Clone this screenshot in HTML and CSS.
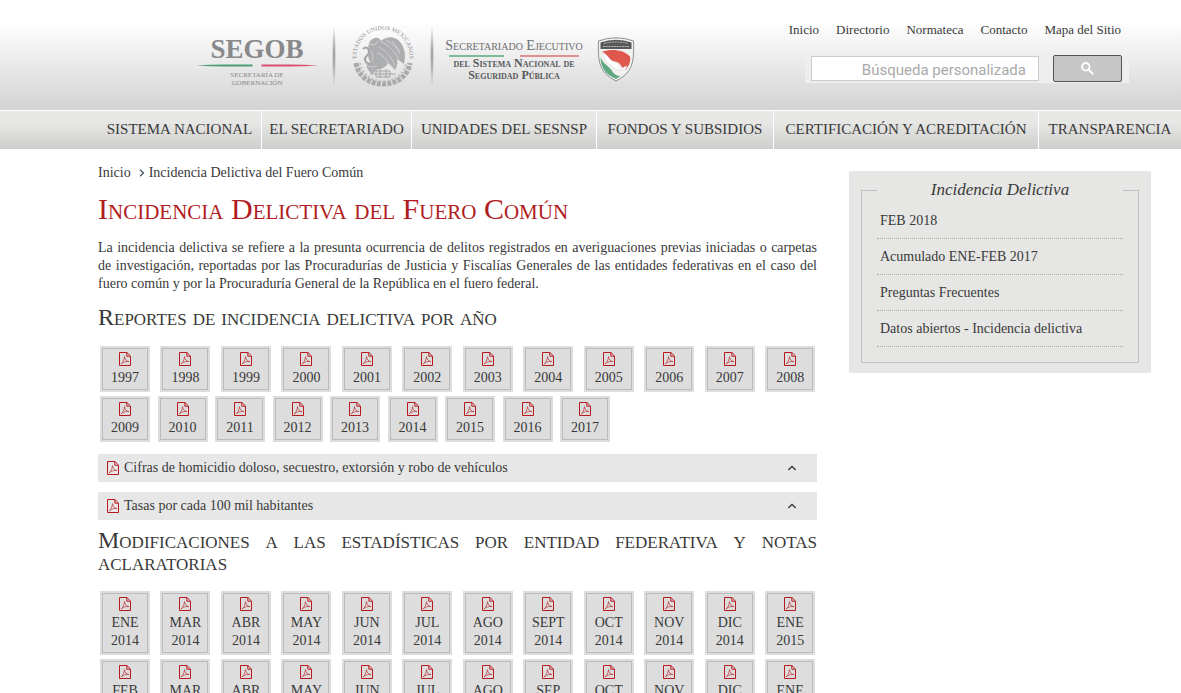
FILE: index.html
```html
<!DOCTYPE html>
<html lang="es">
<head>
<meta charset="utf-8">
<meta name="viewport" content="width=device-width, initial-scale=1">
<title>Incidencia Delictiva del Fuero Común</title>
<link rel="stylesheet" href="styles.css">
</head>
<body>
<svg class="defs" width="0" height="0" aria-hidden="true">
  <symbol id="pdf" viewBox="0 0 12 14">
    <path d="M.5.5h7.4l3.6 3.6v9.4H.5z M7.8.6v3.6h3.6" fill="none" stroke="currentColor"/>
    <path d="M2.2 11.8c1.6-.9 3-4 3.3-7.2.3 2.600 1.800 4.800 4.400 5-2.400-.6-5 .1-7.700 2.200z" fill="none" stroke="currentColor" stroke-width=".6"/>
  </symbol>
  <symbol id="up" viewBox="0 0 10 6"><path d="M1.300 5 5 1.500 8.700 5" fill="none" stroke="currentColor" stroke-width="1.300"/></symbol>
</svg>
<header class="header">
  <div class="logos">
    <div class="segob">
      <span class="segob-name">SEGOB</span>
      <svg class="segob-line" viewBox="0 0 122 3" aria-hidden="true"><path d="M0 1.500Q14 .5 28 .5h28.500v2H28Q14 2.500 0 1.500z" fill="#4c9c74"/><path d="M65.500.5H94q14 0 28 1-14 1-28 1H65.500z" fill="#d9506f"/></svg>
      <span class="segob-sub">SECRETARÍA DE<br>GOBERNACIÓN</span>
    </div>
    <span class="divider"></span>
    <svg class="seal" viewBox="0 0 62 62" role="img" aria-label="Estados Unidos Mexicanos">
      <defs><path id="arc" d="M6 40a26.500 26.500 0 1 1 50 0"/></defs>
      <text class="seal-text"><textPath href="#arc" startOffset="50%" text-anchor="middle">ESTADOS UNIDOS MEXICANOS</textPath></text>
      <path d="M4 38c2 13 13 21 27 21s25-8 27-21" fill="none" stroke="#a9aaac" stroke-width="5" stroke-dasharray="4 1.200"/>
      <path d="M8 38c2 11 11 18 23 18s21-7 23-18" fill="none" stroke="#bcbdbf" stroke-width="2" stroke-dasharray="2 2"/>
      <path d="M17 27c-2-6 0-13 6-14 3-1 5 1 6 3 6-5 14-5 19 1 5 6 6 14 4 22-3-2-5-4-7-5 1 4 0 8-2 11-3-3-5-6-7-7-2 4-6 6-10 6l-6 5c-4-3-6-7-5-11 2 1 4 1 6 0-4-1-6-6-4-11z" fill="#adaeb0"/>
      <path d="M29 17c6 2 13 8 18 17M34 15c6 3 11 8 14 14M27 22c6 3 12 9 16 19M25 28c6 2 10 6 12 12M17 19l6 1 3-4M18 26c3 2 4 6 2 10M13 38c3 4 7 5 12 3M40 16l8 10" fill="none" stroke="#d0d0d2" stroke-width="1"/>
      <path d="M11 24c3-3 6-1 6 3s-5 4-4 8 5 4 7 3" fill="none" stroke="#a3a4a6" stroke-width="2"/>
      <path d="M24 46h14v6H24zM28 44v9M34 44v9M18 49h26" fill="#dedede" stroke="#a6a7a9"/>
    </svg>
    <span class="divider"></span>
    <div class="sesnsp">
      <span class="sesnsp-name">Secretariado Ejecutivo</span>
      <span class="sesnsp-line"></span>
      <span class="sesnsp-sub">del Sistema Nacional de<br>Seguridad Pública</span>
    </div>
    <svg class="shield" viewBox="0 0 38 45" aria-hidden="true">
      <path d="M1.500 4Q19-2.500 36.500 4c.6 20 0 31-17.500 40C1.500 35 .9 24 1.500 4z" fill="#f1f1f1" stroke="#8c8d8f"/>
      <path d="M3.500 5.500Q19 0 34.500 5.500V12h-31z" fill="#58585a"/>
      <path d="M7 6.500Q19 3.500 31 6.500M6 9.500h26" fill="none" stroke="#b5b5b5" stroke-dasharray="2 .7"/>
      <path d="M5 14.500c10-3 22-2 28 5 1 5-1 9-4 13-4-1-5-5-8-7-5-2-8-1-11-6-2-3-3-4-5-5z" fill="#e0574e"/>
      <path d="M3.500 20c2 6 7 8 11 13 2 4 5 6 9 6l-4.500 3C8 37 4 31 3.500 20z" fill="#5fa77f"/>
      <path d="M5 16c5 1 6 4 9 7 4 3 7 2 8 6 1 3 4 3 5 1l3-1c0 3-3 4-6 4-6 0-8-4-12-6-4-3-5-7-7-11z" fill="#fff" stroke="#c9c9c9" stroke-width=".4"/>
    </svg>
  </div>
  <div class="tools">
    <nav class="top-links" aria-label="Enlaces">
      <a href="#">Inicio</a><a href="#">Directorio</a><a href="#">Normateca</a><a href="#">Contacto</a><a href="#">Mapa del Sitio</a>
    </nav>
    <form class="search">
      <input class="search-box" type="text" aria-label="Búsqueda personalizada" placeholder="Búsqueda personalizada">
      <button class="search-button" type="button" aria-label="Buscar"><svg width="13" height="13" viewBox="0 0 13 13" aria-hidden="true"><circle cx="4.800" cy="4.800" r="3.800" fill="none" stroke="#fff" stroke-width="1.800"/><path d="m7.600 7.600 4.600 4.600" stroke="#fff" stroke-width="2"/></svg></button>
    </form>
  </div>
</header>
<nav class="menu" aria-label="Principal">
  <a href="#">SISTEMA NACIONAL</a><a href="#">EL SECRETARIADO</a><a href="#">UNIDADES DEL SESNSP</a><a href="#">FONDOS Y SUBSIDIOS</a><a href="#">CERTIFICACIÓN Y ACREDITACIÓN</a><a href="#">TRANSPARENCIA</a>
</nav>
<div class="page">
  <main class="content">
    <nav class="breadcrumb" aria-label="Ruta"><a href="#">Inicio</a><svg width="6" height="8" viewBox="0 0 6 8" aria-hidden="true"><path d="m1 .8 3.500 3.200L1 7.200" fill="none" stroke="#44525e" stroke-width="1.300"/></svg><span>Incidencia Delictiva del Fuero Común</span></nav>
    <h1 class="title">Incidencia Delictiva del Fuero Común</h1>
    <p class="intro">La incidencia delictiva se refiere a la presunta ocurrencia de delitos registrados en averiguaciones previas iniciadas o carpetas de&nbsp;investigación, reportadas por las Procuradurías de Justicia y Fiscalías Generales de las entidades federativas en el caso del fuero&nbsp;común y por la Procuraduría General de la República en el fuero federal.</p>
    <h2 class="subtitle">Reportes de incidencia delictiva por año</h2>
    <div class="tiles" data-items="1997,1998,1999,2000,2001,2002,2003,2004,2005,2006,2007,2008,2009,2010,2011,2012,2013,2014,2015,2016,2017"></div>
    <button class="fold" type="button"><svg class="pdf"><use href="#pdf"/></svg><span>Cifras de homicidio doloso, secuestro, extorsión y robo de vehículos</span><svg class="fold-arrow"><use href="#up"/></svg></button>
    <button class="fold" type="button"><svg class="pdf"><use href="#pdf"/></svg><span>Tasas por cada 100 mil habitantes</span><svg class="fold-arrow"><use href="#up"/></svg></button>
    <h2 class="subtitle">Modificaciones a las estadísticas por entidad federativa y notas aclaratorias</h2>
    <div class="tiles" data-items="ENE 2014,MAR 2014,ABR 2014,MAY 2014,JUN 2014,JUL 2014,AGO 2014,SEPT 2014,OCT 2014,NOV 2014,DIC 2014,ENE 2015,FEB 2015,MAR 2015,ABR 2015,MAY 2015,JUN 2015,JUL 2015,AGO 2015,SEP 2015,OCT 2015,NOV 2015,DIC 2015,ENE 2016,FEB 2016"></div>
  </main>
  <aside class="side">
    <div class="side-frame">
      <h2 class="side-title">Incidencia Delictiva</h2>
      <ul class="side-list">
        <li><a href="#">FEB 2018</a></li>
        <li><a href="#">Acumulado ENE-FEB 2017</a></li>
        <li><a href="#">Preguntas Frecuentes</a></li>
        <li><a href="#">Datos abiertos - Incidencia delictiva</a></li>
      </ul>
    </div>
  </aside>
</div>
<script src="script.js"></script>
</body>
</html>
```
FILE: styles.css
```css
* { box-sizing: border-box; }
html { scrollbar-width: none; }
body { margin: 0; background: #fff; color: #393939; font: 14px/18px "Liberation Serif", serif; }
a { color: inherit; text-decoration: none; }
svg { display: block; flex: none; }
.defs { position: absolute; }

.header { display: flex; justify-content: space-between; align-items: flex-start; padding: 21px 52px 23px 196px; background: linear-gradient(#fff 20%, #d3d3d3); }
.logos { display: flex; align-items: center; padding-top: 3px; }
.segob { width: 122px; display: flex; flex-direction: column; align-items: center; padding-top: 10px; color: #88898b; }
.segob-name { font-size: 27px; line-height: 30px; font-weight: bold; }
.segob-line { width: 100%; height: 3px; }
.segob-sub { margin-top: 4px; font-size: 7px; line-height: 8px; text-align: center; }
.divider { width: 4px; height: 62px; margin: 0 14px; background: radial-gradient(closest-side, #8a8c8e, transparent); }
.seal { width: 62px; height: 62px; margin: 0 2px; overflow: visible; }
.seal-text { font-size: 6px; fill: #8f9092; }
.sesnsp { display: flex; flex-direction: column; align-items: center; width: 140px; margin-left: -4px; padding-top: 6px; color: #58595b; white-space: nowrap; }
.sesnsp-name { font-size: 14px; line-height: 18px; font-variant: small-caps; color: #6e6f71; }
.sesnsp-line { align-self: stretch; height: 2px; margin: 0 5px; background: linear-gradient(90deg, #7dbb98 42%, transparent 42% 55%, #e09090 55%); }
.sesnsp-sub { font-size: 12px; line-height: 12px; font-weight: bold; font-variant: small-caps; text-align: center; }
.shield { width: 38px; height: 45px; margin: 8px 0 0 13px; }

.tools { display: flex; flex-direction: column; align-items: flex-end; gap: 15px; }
.top-links { display: flex; gap: 17px; padding-right: 8px; font-size: 13px; }
.search { display: flex; align-items: center; gap: 14px; height: 29px; padding: 0 7px 0 6px; background: #eee; }
.search-box { width: 228px; height: 25px; padding: 2px 12px 0; border: 1px solid #ccc; background: #fff; font: 15px Roboto, sans-serif; text-align: right; }
.search-box::placeholder { color: #a9a9a9; opacity: 1; }
.search-button { display: grid; place-items: center; width: 69px; height: 27px; padding: 0; border: 1px solid #555; border-radius: 2px; background: #c6c6c6; }

.menu { display: grid; grid-template-columns: 165fr 150fr 185fr 177fr 265fr 142fr; padding-left: 97px; border-top: 1px solid #fff; background: linear-gradient(#e7e7e5 30%, #cdcdcb); font-size: 15px; white-space: nowrap; }
.menu a { padding: 9px 0 11px; border-right: 1px solid #fff; text-align: center; }
.menu a:first-child { padding-left: 1px; }
.menu a:last-child { border-right: 0; }

.page { display: grid; grid-template-columns: minmax(0, 1fr) 302px; gap: 32px; align-items: start; padding: 15px 30px 0 98px; }
.breadcrumb { display: flex; align-items: center; gap: 4px; }
.breadcrumb a { margin-right: 4px; }
.title { margin: 13px 0 16px; font-size: 30px; line-height: 28px; font-weight: normal; font-variant: small-caps; color: #b01c22; }
.intro { margin: 0; text-align: justify; }
.subtitle { margin: 13px 0 16px; font-size: 24px; line-height: 22px; font-weight: normal; font-variant: small-caps; text-align: justify; }
.fold + .subtitle { margin-top: 9px; }
.tiles { text-align: justify; }
.tile { display: inline-block; vertical-align: top; width: 50px; margin: 2px; padding: 3px 1px; border: 2px solid #ddd; box-shadow: inset 0 0 0 1px #bbb; background: #ddd; text-align: center; }
.pdf { width: 12px; height: 14px; color: #b7191f; }
.tile .pdf { margin: 1px auto 3px; }
.fold { display: flex; align-items: center; gap: 5px; width: 100%; margin: 10px 0 0; padding: 5px 20px 5px 9px; border: 0; background: #e7e7e7; color: inherit; font: inherit; text-align: left; }
.fold-arrow { width: 10px; height: 6px; margin-left: auto; }

.side { margin-top: 7px; padding: 19px 12px 10px; background: #e6e6e4; }
.side-frame { padding: 0 15px; border: 1px solid #c0c0c0; }
.side-title { margin: -14px 0 0; background: #e6e6e4; font-size: 17px; line-height: 26px; font-weight: normal; font-style: italic; text-align: center; }
.side-list { margin: 0 0 15px; padding: 0; list-style: none; }
.side-list li { padding: 9px 3px 8px; border-bottom: 1px dotted #aaa; }
```
FILE: script.js
```js
document.querySelectorAll(".tiles").forEach(function (box) {
  box.innerHTML = box.dataset.items.split(",").map(function (name) {
    return '<a class="tile" href="#"><svg class="pdf" aria-hidden="true"><use href="#pdf"/></svg>' + name.replace(" ", "<br>") + "</a>";
  }).join(" ");
});
```
